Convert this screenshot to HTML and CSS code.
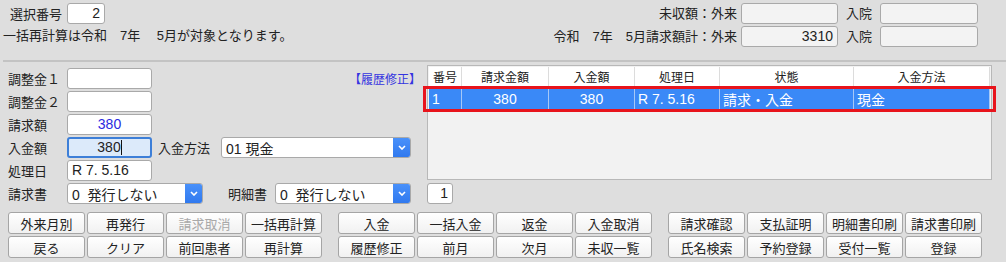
FILE: index.html
```html
<!DOCTYPE html>
<html lang="ja">

<head>
    <meta charset="UTF-8">
    <title>入金処理</title>
    <link rel="stylesheet" href="styles.css">
</head>

<body>
    <div class="top">
        <div class="top-left">
            <div class="sel-row">
                <span class="sel-label">選択番号</span>
                <div class="field sel-no">2</div>
            </div>
            <p class="notice">一括再計算は令和　7年　 5月が対象となります。</p>
        </div>
        <div class="totals">
            <span class="t-label">未収額：外来</span>
            <div class="field gray wide"></div>
            <span class="t-label">入院</span>
            <div class="field gray wide2"></div>
            <span class="t-label">令和　7年　5月請求額計：外来</span>
            <div class="field gray wide num">3310</div>
            <span class="t-label">入院</span>
            <div class="field gray wide2"></div>
        </div>
    </div>
    <div class="rule"></div>

    <div class="middle">
        <div class="form">
            <div class="frow">
                <span class="flabel">調整金１</span>
                <div class="field amt"></div>
                <span class="history">【履歴修正】</span>
            </div>
            <div class="frow">
                <span class="flabel">調整金２</span>
                <div class="field amt"></div>
            </div>
            <div class="frow">
                <span class="flabel">請求額</span>
                <div class="field amt center blue">380</div>
            </div>
            <div class="frow">
                <span class="flabel">入金額</span>
                <div class="field amt center focus">380<span class="caret"></span></div>
                <span class="flabel method-label">入金方法</span>
                <div class="select method">
                    <span>01 現金</span>
                    <span class="arrow"><svg width="8" height="5" viewBox="0 0 8 5"><path d="M1 1l3 3 3-3" fill="none" stroke="#fff" stroke-width="1.6"/></svg></span>
                </div>
            </div>
            <div class="frow">
                <span class="flabel">処理日</span>
                <div class="field amt">R 7. 5.16</div>
            </div>
            <div class="frow">
                <span class="flabel">請求書</span>
                <div class="select doc">
                    <span>0&nbsp; 発行しない</span>
                    <span class="arrow"><svg width="8" height="5" viewBox="0 0 8 5"><path d="M1 1l3 3 3-3" fill="none" stroke="#fff" stroke-width="1.6"/></svg></span>
                </div>
                <span class="flabel detail-label">明細書</span>
                <div class="select doc">
                    <span>0&nbsp; 発行しない</span>
                    <span class="arrow"><svg width="8" height="5" viewBox="0 0 8 5"><path d="M1 1l3 3 3-3" fill="none" stroke="#fff" stroke-width="1.6"/></svg></span>
                </div>
            </div>
        </div>

        <div class="history-panel">
            <div class="table-box">
                <table class="hist">
                    <colgroup>
                        <col style="width: 33px">
                        <col style="width: 87px">
                        <col style="width: 86px">
                        <col style="width: 85px">
                        <col style="width: 134px">
                        <col>
                    </colgroup>
                    <thead>
                        <tr>
                            <th>番号</th>
                            <th>請求金額</th>
                            <th>入金額</th>
                            <th>処理日</th>
                            <th>状態</th>
                            <th>入金方法</th>
                        </tr>
                    </thead>
                    <tbody>
                        <tr class="selected">
                            <td>1</td>
                            <td class="c">380</td>
                            <td class="c">380</td>
                            <td>R 7. 5.16</td>
                            <td>請求・入金</td>
                            <td>現金</td>
                        </tr>
                    </tbody>
                </table>
            </div>
            <div class="sel-mark"></div>
            <div class="field page-no">1</div>
        </div>
    </div>

    <div class="buttons">
        <div class="btn-group">
            <button>外来月別</button>
            <button>再発行</button>
            <button class="off">請求取消</button>
            <button>一括再計算</button>
            <button>戻る</button>
            <button>クリア</button>
            <button>前回患者</button>
            <button>再計算</button>
        </div>
        <div class="btn-group">
            <button>入金</button>
            <button>一括入金</button>
            <button>返金</button>
            <button>入金取消</button>
            <button>履歴修正</button>
            <button>前月</button>
            <button>次月</button>
            <button>未収一覧</button>
        </div>
        <div class="btn-group">
            <button>請求確認</button>
            <button>支払証明</button>
            <button>明細書印刷</button>
            <button>請求書印刷</button>
            <button>氏名検索</button>
            <button>予約登録</button>
            <button>受付一覧</button>
            <button>登録</button>
        </div>
    </div>
</body>

</html>
```

FILE: styles.css
```css
* {
    margin: 0;
    padding: 0;
    box-sizing: border-box;
}

body {
    width: 1006px;
    height: 262px;
    overflow: hidden;
    background: #dedede;
    font-family: "Liberation Sans", "Noto Sans CJK JP", sans-serif;
    font-size: 13px;
    color: #222;
}

/* generic text box */
.field {
    height: 21px;
    line-height: 19px;
    border: 1px solid #a9a9a9;
    border-radius: 3px;
    background: #fff;
    font-size: 14px;
    padding: 0 4px;
    white-space: nowrap;
}

.field.gray {
    background: #f3f3f3;
}

.num {
    text-align: right;
}

.center {
    text-align: center;
}

.blue {
    color: #2a2ae0;
}

/* top area */
.top {
    height: 60px;
    display: flex;
    justify-content: space-between;
    align-items: flex-start;
    padding: 3px 28px 0 3px;
}

.sel-row {
    display: flex;
    align-items: center;
    padding-left: 7px;
}

.sel-label {
    width: 57px;
}

.sel-no {
    width: 38px;
    text-align: right;
}

.notice {
    margin-top: 1px;
}

.totals {
    display: grid;
    grid-template-columns: auto 97px auto 98px;
    grid-auto-rows: 21px;
    column-gap: 4px;
    row-gap: 2px;
    align-items: center;
}

.t-label {
    text-align: right;
    line-height: 21px;
}

.t-label:nth-child(3),
.t-label:nth-child(7) {
    padding: 0 4px 0 4px;
}

.rule {
    margin-left: 3px;
    height: 2px;
    background: #c3c3c3;
}

/* middle area */
.middle {
    display: flex;
    padding-left: 8px;
    height: 150px;
}

.form {
    width: 413px;
    padding-top: 6px;
}

.frow {
    display: flex;
    align-items: center;
    height: 21px;
    margin-bottom: 2px;
}

.flabel {
    width: 59px;
    flex-shrink: 0;
}

.amt {
    width: 85px;
}

.history {
    margin-left: auto;
    color: #3434e0;
    font-size: 12px;
}

.focus {
    background: #dceafa;
    border: 2px solid #3d7fd8;
    line-height: 17px;
}

.caret {
    display: inline-block;
    width: 1px;
    height: 15px;
    background: #111;
    vertical-align: -3px;
}

.method-label {
    margin-left: 6px;
    width: 63px;
}

.detail-label {
    margin-left: 25px;
    width: 47px;
}

.select {
    height: 21px;
    display: flex;
    align-items: center;
    justify-content: space-between;
    border: 1px solid #a9a9a9;
    border-radius: 3px;
    background: #fff;
    font-size: 14px;
    padding-left: 4px;
    overflow: hidden;
}

.select.method {
    width: 190px;
}

.select.doc {
    width: 136px;
}

.arrow {
    width: 18px;
    height: 21px;
    margin-right: -1px;
    display: flex;
    align-items: center;
    justify-content: center;
    background: linear-gradient(#4a92fb, #2f78ee);
    border-radius: 0 3px 3px 0;
}

.history-panel {
    position: relative;
    margin-left: 6px;
    padding-top: 3px;
}

.table-box {
    width: 565px;
    height: 115px;
    border: 1px solid #b8b8b8;
    background: #f2f2f2;
    padding: 1px;
}

.hist {
    width: 100%;
    table-layout: fixed;
    border-collapse: separate;
    border-spacing: 0;
}

.hist th {
    height: 20px;
    background: #fff;
    font-weight: normal;
    font-size: 12px;
    border-right: 1px solid #dcdcdc;
    border-bottom: 1px solid #d0d0d0;
}

.hist td {
    height: 20px;
    padding: 0 3px;
    font-size: 14px;
    white-space: nowrap;
}

.hist td.c {
    text-align: center;
}

.selected td {
    background: #3a89f7;
    color: #fff;
    border-right: 1px solid #a6c8f6;
    border-top: 2px solid #f2f2f2;
}

.sel-mark {
    position: absolute;
    left: -4px;
    top: 24px;
    width: 573px;
    height: 26px;
    border: 3px solid #e8141c;
}

.page-no {
    width: 26px;
    margin-top: 3px;
    text-align: right;
}

/* button bar */
.buttons {
    display: flex;
    gap: 16px;
    padding: 0 0 0 8px;
}

.btn-group {
    display: grid;
    grid-template-columns: repeat(4, 77px);
    gap: 2px;
}

.btn-group button {
    height: 22px;
    font-family: inherit;
    font-size: 13px;
    color: #222;
    background: linear-gradient(#ffffff, #f1f1f1);
    border: 1px solid #a5a5a5;
    border-radius: 3px;
}

.btn-group button.off {
    color: #a9a9a9;
}
```
